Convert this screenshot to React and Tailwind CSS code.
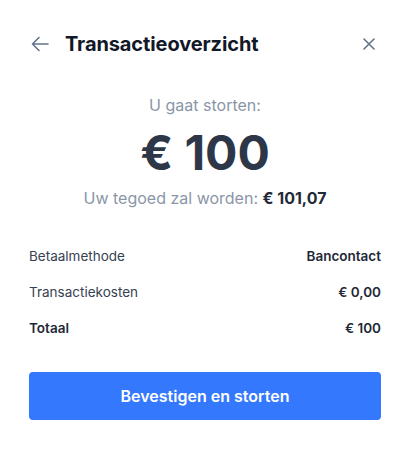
import React from 'react';

const Row = ({ label, value, strong }) => (
  <div className="flex items-center justify-between h-9">
    <span className={strong ? 'font-semibold text-[#1f2937]' : 'text-[#374151]'}>{label}</span>
    <span className="font-semibold text-[#1f2937]">{value}</span>
  </div>
);

const App = () => {
  return (
    <div className="w-[408px] h-[449px] bg-white font-['Inter',sans-serif] pl-[29px] pr-[27px] pt-[30px]">
      {/* header */}
      <div className="flex items-center h-7">
        <button className="ml-[2px] w-[18px] h-[18px] text-[#64748b]">
          <svg viewBox="0 0 18 18" width="18" height="18" fill="none" stroke="currentColor" strokeWidth="1.6" strokeLinecap="round" strokeLinejoin="round">
            <path d="M17 9H1.5M8 2.5 1.5 9 8 15.5" />
          </svg>
        </button>
        <h1 className="ml-[16px] text-[20px] font-bold text-[#111827] tracking-[-0.1px]">Transactieoverzicht</h1>
        <button className="ml-auto mr-[6px] w-3 h-3 text-[#64748b]">
          <svg viewBox="0 0 12 12" width="12" height="12" fill="none" stroke="currentColor" strokeWidth="1.6" strokeLinecap="round">
            <path d="M1 1l10 10M11 1 1 11" />
          </svg>
        </button>
      </div>

      {/* amount */}
      <div className="flex flex-col items-center mt-[35px]">
        <p className="text-[16px] text-[#8a96a8]">U gaat storten:</p>
        <p className="text-[48px] leading-none font-bold text-[#2d3748] mt-[12px]">€ 100</p>
        <p className="text-[16px] text-[#8a96a8] mt-[9px]">
          Uw tegoed zal worden: <span className="font-bold text-[#1f2937]">€ 101,07</span>
        </p>
      </div>

      {/* details */}
      <div className="mt-[28px] text-[13.5px]">
        <Row label="Betaalmethode" value="Bancontact" />
        <Row label="Transactiekosten" value="€ 0,00" />
        <Row label="Totaal" value="€ 100" strong />
      </div>

      <button className="mt-[26px] w-full h-12 rounded bg-[#3478fe] text-white text-[16px] font-semibold">
        Bevestigen en storten
      </button>
    </div>
  );
};

export default App;
